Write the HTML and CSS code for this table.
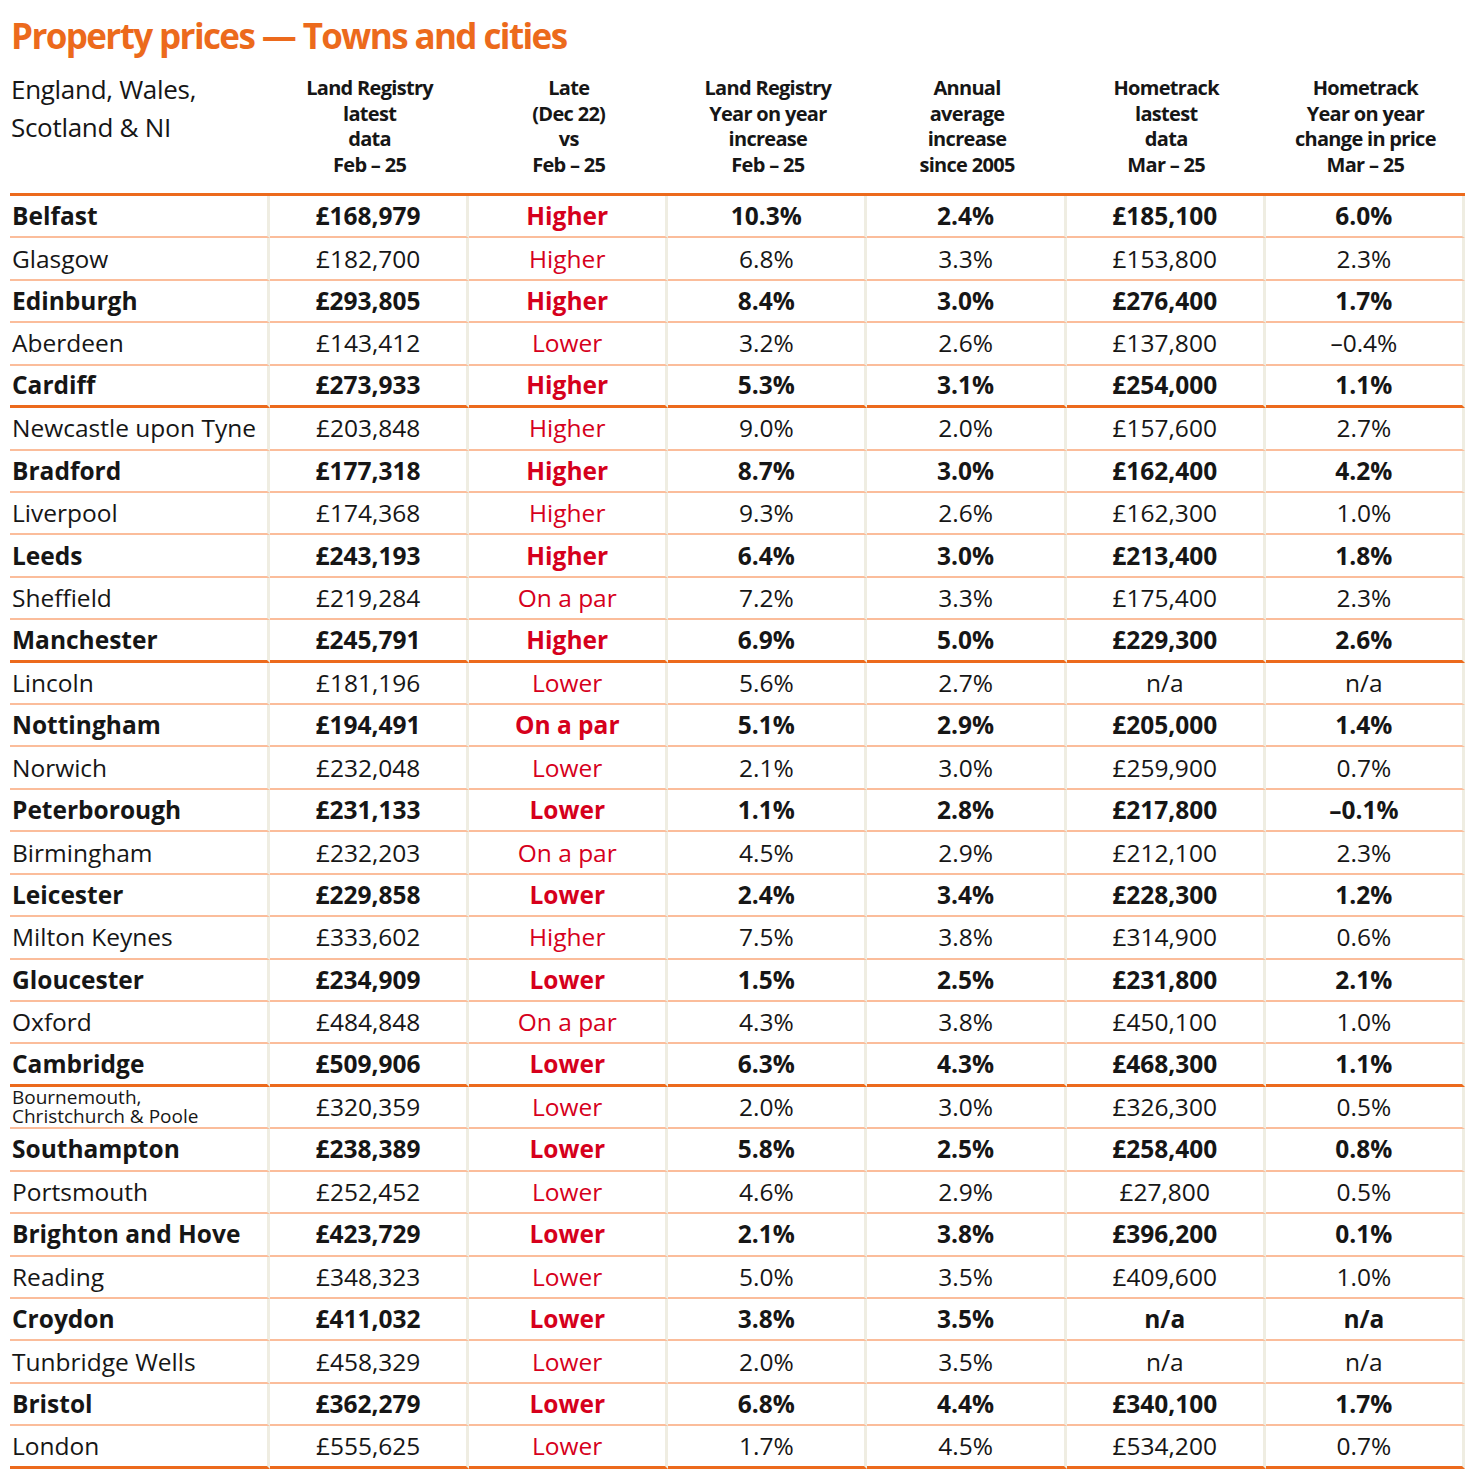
FILE: index.html
```html
<!DOCTYPE html>
<html lang="en">
<head>
    <meta charset="UTF-8">
    <meta name="viewport" content="width=device-width, initial-scale=1.0">
    <title>Property prices - Towns and cities</title>
    <link rel="stylesheet" href="styles.css">
</head>
<body>
    <h1 class="title">Property prices — Towns and cities</h1>
    <table class="prices">
        <colgroup>
            <col class="col-city">
            <col><col><col><col><col><col>
        </colgroup>
        <thead>
            <tr>
                <th class="region">England, Wales,<br>Scotland &amp; NI</th>
                <th>Land Registry<br>latest<br>data<br>Feb – 25</th>
                <th>Late<br>(Dec 22)<br>vs<br>Feb – 25</th>
                <th>Land Registry<br>Year on year<br>increase<br>Feb – 25</th>
                <th>Annual<br>average<br>increase<br>since 2005</th>
                <th>Hometrack<br>lastest<br>data<br>Mar – 25</th>
                <th>Hometrack<br>Year on year<br>change in price<br>Mar – 25</th>
            </tr>
        </thead>
        <tbody>
            <tr class="bold"><td>Belfast</td><td>£168,979</td><td class="trend">Higher</td><td>10.3%</td><td>2.4%</td><td>£185,100</td><td>6.0%</td></tr>
            <tr><td>Glasgow</td><td>£182,700</td><td class="trend">Higher</td><td>6.8%</td><td>3.3%</td><td>£153,800</td><td>2.3%</td></tr>
            <tr class="bold"><td>Edinburgh</td><td>£293,805</td><td class="trend">Higher</td><td>8.4%</td><td>3.0%</td><td>£276,400</td><td>1.7%</td></tr>
            <tr><td>Aberdeen</td><td>£143,412</td><td class="trend">Lower</td><td>3.2%</td><td>2.6%</td><td>£137,800</td><td>–0.4%</td></tr>
            <tr class="bold end"><td>Cardiff</td><td>£273,933</td><td class="trend">Higher</td><td>5.3%</td><td>3.1%</td><td>£254,000</td><td>1.1%</td></tr>

            <tr><td>Newcastle upon Tyne</td><td>£203,848</td><td class="trend">Higher</td><td>9.0%</td><td>2.0%</td><td>£157,600</td><td>2.7%</td></tr>
            <tr class="bold"><td>Bradford</td><td>£177,318</td><td class="trend">Higher</td><td>8.7%</td><td>3.0%</td><td>£162,400</td><td>4.2%</td></tr>
            <tr><td>Liverpool</td><td>£174,368</td><td class="trend">Higher</td><td>9.3%</td><td>2.6%</td><td>£162,300</td><td>1.0%</td></tr>
            <tr class="bold"><td>Leeds</td><td>£243,193</td><td class="trend">Higher</td><td>6.4%</td><td>3.0%</td><td>£213,400</td><td>1.8%</td></tr>
            <tr><td>Sheffield</td><td>£219,284</td><td class="trend">On a par</td><td>7.2%</td><td>3.3%</td><td>£175,400</td><td>2.3%</td></tr>
            <tr class="bold end"><td>Manchester</td><td>£245,791</td><td class="trend">Higher</td><td>6.9%</td><td>5.0%</td><td>£229,300</td><td>2.6%</td></tr>

            <tr><td>Lincoln</td><td>£181,196</td><td class="trend">Lower</td><td>5.6%</td><td>2.7%</td><td>n/a</td><td>n/a</td></tr>
            <tr class="bold"><td>Nottingham</td><td>£194,491</td><td class="trend">On a par</td><td>5.1%</td><td>2.9%</td><td>£205,000</td><td>1.4%</td></tr>
            <tr><td>Norwich</td><td>£232,048</td><td class="trend">Lower</td><td>2.1%</td><td>3.0%</td><td>£259,900</td><td>0.7%</td></tr>
            <tr class="bold"><td>Peterborough</td><td>£231,133</td><td class="trend">Lower</td><td>1.1%</td><td>2.8%</td><td>£217,800</td><td>–0.1%</td></tr>
            <tr><td>Birmingham</td><td>£232,203</td><td class="trend">On a par</td><td>4.5%</td><td>2.9%</td><td>£212,100</td><td>2.3%</td></tr>
            <tr class="bold"><td>Leicester</td><td>£229,858</td><td class="trend">Lower</td><td>2.4%</td><td>3.4%</td><td>£228,300</td><td>1.2%</td></tr>
            <tr><td>Milton Keynes</td><td>£333,602</td><td class="trend">Higher</td><td>7.5%</td><td>3.8%</td><td>£314,900</td><td>0.6%</td></tr>
            <tr class="bold"><td>Gloucester</td><td>£234,909</td><td class="trend">Lower</td><td>1.5%</td><td>2.5%</td><td>£231,800</td><td>2.1%</td></tr>
            <tr><td>Oxford</td><td>£484,848</td><td class="trend">On a par</td><td>4.3%</td><td>3.8%</td><td>£450,100</td><td>1.0%</td></tr>
            <tr class="bold end"><td>Cambridge</td><td>£509,906</td><td class="trend">Lower</td><td>6.3%</td><td>4.3%</td><td>£468,300</td><td>1.1%</td></tr>

            <tr><td class="small">Bournemouth,<br>Christchurch &amp; Poole</td><td>£320,359</td><td class="trend">Lower</td><td>2.0%</td><td>3.0%</td><td>£326,300</td><td>0.5%</td></tr>
            <tr class="bold"><td>Southampton</td><td>£238,389</td><td class="trend">Lower</td><td>5.8%</td><td>2.5%</td><td>£258,400</td><td>0.8%</td></tr>
            <tr><td>Portsmouth</td><td>£252,452</td><td class="trend">Lower</td><td>4.6%</td><td>2.9%</td><td>£27,800</td><td>0.5%</td></tr>
            <tr class="bold"><td>Brighton and Hove</td><td>£423,729</td><td class="trend">Lower</td><td>2.1%</td><td>3.8%</td><td>£396,200</td><td>0.1%</td></tr>
            <tr><td>Reading</td><td>£348,323</td><td class="trend">Lower</td><td>5.0%</td><td>3.5%</td><td>£409,600</td><td>1.0%</td></tr>
            <tr class="bold"><td>Croydon</td><td>£411,032</td><td class="trend">Lower</td><td>3.8%</td><td>3.5%</td><td>n/a</td><td>n/a</td></tr>
            <tr><td>Tunbridge Wells</td><td>£458,329</td><td class="trend">Lower</td><td>2.0%</td><td>3.5%</td><td>n/a</td><td>n/a</td></tr>
            <tr class="bold"><td>Bristol</td><td>£362,279</td><td class="trend">Lower</td><td>6.8%</td><td>4.4%</td><td>£340,100</td><td>1.7%</td></tr>
            <tr class="end"><td>London</td><td>£555,625</td><td class="trend">Lower</td><td>1.7%</td><td>4.5%</td><td>£534,200</td><td>0.7%</td></tr>
        </tbody>
    </table>
</body>
</html>
```

FILE: styles.css
```css
* {
    box-sizing: border-box;
    margin: 0;
    padding: 0;
}

body {
    background-color: white;
    color: #161616;
    font-family: 'Open Sans', 'Noto Sans', sans-serif;
    padding: 14px 10px 0 10px;
}

.title {
    color: #ec6a1c;
    font-size: 35px;
    font-weight: 700;
    line-height: 44px;
    letter-spacing: -1.6px;
    padding-left: 1px;
}

.prices {
    width: 1455px;
    border-collapse: separate;
    border-spacing: 0;
    table-layout: fixed;
    margin-top: 12px;
}

.col-city {
    width: 260px;
}

.prices th {
    vertical-align: top;
    text-align: center;
    font-size: 20px;
    font-weight: 700;
    letter-spacing: -0.7px;
    line-height: 25.5px;
    padding-top: 5px;
    padding-bottom: 16px;
    border-bottom: 3px solid #ec6a1c;
}

.prices th.region {
    text-align: left;
    font-size: 26px;
    font-weight: 400;
    letter-spacing: -0.3px;
    line-height: 38px;
    padding-top: 0;
    padding-left: 1px;
}

.prices td {
    height: 42.43px;
    text-align: center;
    vertical-align: middle;
    font-size: 24.5px;
    line-height: 28px;
    border-right: 3px solid #efede2;
    border-bottom: 2px solid #fbbd9b;
}

.prices td:first-child {
    text-align: left;
    padding-left: 2px;
}

.prices tr.bold td {
    font-weight: 700;
}

.prices tr.end td {
    border-bottom: 3px solid #ec6a1c;
}

.prices td.trend {
    color: #d6001c;
}

.prices td.small {
    font-size: 19px;
    line-height: 19px;
}
```
